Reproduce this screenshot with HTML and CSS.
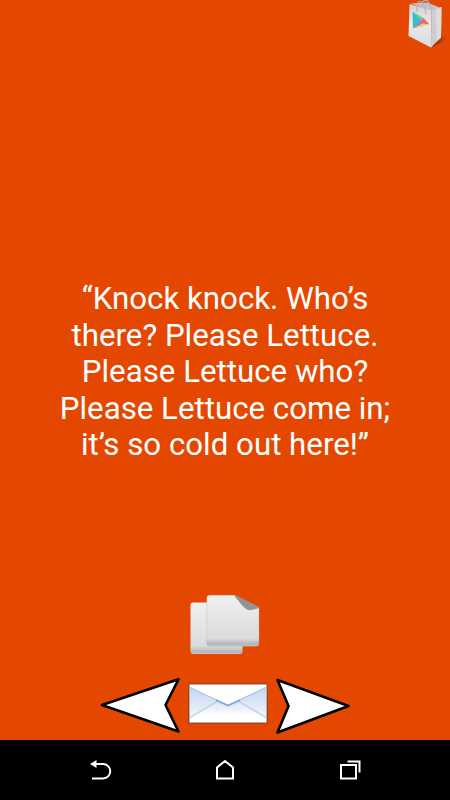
FILE: index.html
```html
<!DOCTYPE html>
<html lang="en">
<head>
    <meta charset="UTF-8">
    <meta name="viewport" content="width=device-width, initial-scale=1.0">
    <title>Knock Knock Jokes</title>
    <link rel="stylesheet" href="styles.css">
</head>
<body>

    <header>
        <svg class="store" width="50" height="50" viewBox="0 0 50 50">
            <defs>
                <linearGradient id="bag" x1="0" y1="0" x2="0" y2="1">
                    <stop offset="0" stop-color="#d3d3d6"/>
                    <stop offset="0.5" stop-color="#e9e9ec"/>
                    <stop offset="1" stop-color="#d8d9de"/>
                </linearGradient>
                <linearGradient id="shadow" x1="0" y1="0" x2="1" y2="0">
                    <stop offset="0" stop-color="#6b2000" stop-opacity="0.8"/>
                    <stop offset="1" stop-color="#6b2000" stop-opacity="0"/>
                </linearGradient>
            </defs>
            <path d="M31 47L41 36L48 38L39 44Z" fill="url(#shadow)"/>
            <path d="M10.500 3.500L27 2.500L41 8L31 11Z" fill="#c3c4c8"/>
            <path d="M9.500 4L31.500 10.500L31 47.500L8.500 36Z" fill="url(#bag)"/>
            <path d="M31.500 10.500L41.500 7L41 37.500L31 47.500Z" fill="#cdced2"/>
            <path d="M36 9.500L41.500 7L41 37.500L36.500 41Z" fill="#dcdde0"/>
            <path d="M12.500 11.500L13 28.500L21 20.500Z" fill="#35bfc8"/>
            <path d="M12.500 11.500L21 20.500L23.500 18Z" fill="#55d0a0"/>
            <path d="M20.500 20.500L23.500 18L29.500 24.500L23 24.500Z" fill="#ef6670"/>
            <path d="M13 28.500L20.500 20.500L23.500 24.500Z" fill="#a277c8"/>
            <path d="M13 28.500L22.500 23.500L29.500 24.500L22 26.500Z" fill="#e9cf65"/>
            <path d="M17 12V7C17 3 18 1.500 20 1.500S25 6 26 14M22 6V3.500C22 1 24 0.500 26 0.500S30 4 31 9" fill="none" stroke="#b4b4ba" stroke-width="1.200"/>
        </svg>
    </header>

    <main>
        <p class="joke">“Knock knock. Who’s<br>there? Please Lettuce.<br>Please Lettuce who?<br>Please Lettuce come in;<br>it’s so cold out here!”</p>
    </main>

    <div class="controls">
        <svg class="copy" width="90" height="75" viewBox="0 0 90 75">
            <defs>
                <linearGradient id="paper" x1="0" y1="0" x2="0" y2="1">
                    <stop offset="0" stop-color="#f0f0f0"/>
                    <stop offset="0.85" stop-color="#dadbdd"/>
                    <stop offset="0.96" stop-color="#b2b3b5"/>
                    <stop offset="1" stop-color="#c6c7c9"/>
                </linearGradient>
            </defs>
            <rect x="10.500" y="17.500" width="52" height="51.500" rx="2.500" fill="url(#paper)"/>
            <path d="M29.500 10.200H54.500L79 22.500V58.500Q79 61.200 76.300 61.200H29.500Q26.800 61.200 26.800 58.500V12.900Q26.800 10.200 29.500 10.200Z" fill="url(#paper)" stroke="#aeafb0" stroke-opacity="0.5" stroke-width="0.600"/>
            <path d="M54 10.200L57 10.700L79 22L78 23.500L70 25.200C65 25 60 18 54 10.200Z" fill="#929394"/>
        </svg>

        <div class="buttons">
            <svg class="prev" width="85" height="60" viewBox="0 0 85 60">
                <path d="M7 30L83.500 4.300L70.500 30L83.500 56.500Z" fill="#fff" stroke="#000" stroke-width="2.600" stroke-linejoin="round"/>
            </svg>
            <svg class="mail" width="90" height="60" viewBox="0 0 90 60">
                <defs>
                    <linearGradient id="side" x1="0" y1="0" x2="0" y2="1">
                        <stop offset="0" stop-color="#c1d5ee"/>
                        <stop offset="1" stop-color="#f4f8fc"/>
                    </linearGradient>
                    <linearGradient id="front" x1="0" y1="0" x2="0" y2="1">
                        <stop offset="0" stop-color="#d6e3f4"/>
                        <stop offset="0.700" stop-color="#fff"/>
                    </linearGradient>
                </defs>
                <rect x="3.200" y="8.200" width="79.600" height="40.600" rx="1" fill="#5d2c16" fill-opacity="0.6"/>
                <rect x="4" y="9" width="78" height="39" fill="#fff" stroke="#87563f" stroke-width="1"/>
                <path d="M5 12L33 26L5 43Z" fill="url(#side)"/>
                <path d="M81 12L53 26L81 43Z" fill="url(#side)"/>
                <path d="M5 43L33 26L43 30L53 26L81 43V47H5Z" fill="url(#front)"/>
                <path d="M5 42.500L33 26M81 42.500L53 26" fill="none" stroke="#b9cfe9" stroke-width="1.400"/>
                <path d="M5 12.500L33 25.800M81 12.500L53 25.800" fill="none" stroke="#a8c5e8" stroke-width="1.200"/>
                <path d="M31 25L43 30.500L55 25" fill="none" stroke="#7ba4da" stroke-width="1.800"/>
            </svg>
            <svg class="next" width="85" height="60" viewBox="0 0 85 60">
                <path d="M2.500 5L73.500 31L2.500 57.500L13.500 31Z" fill="#fff" stroke="#000" stroke-width="2.600" stroke-linejoin="round"/>
            </svg>
        </div>
    </div>

    <nav>
        <svg width="24" height="24" viewBox="0 0 24 24">
            <path d="M5 6H15A7.200 7.200 0 0 1 15 20.500H4" fill="none" stroke="#fff" stroke-width="2"/>
            <path d="M2 6L8.500 2V10Z" fill="#fff"/>
        </svg>
        <svg width="24" height="24" viewBox="0 0 24 24">
            <path d="M4 20.500V9.500L12 3L20 9.500V20.500Z" fill="none" stroke="#fff" stroke-width="2"/>
        </svg>
        <svg width="24" height="24" viewBox="0 0 24 24">
            <path d="M3 7H18V20.500H3Z" fill="none" stroke="#fff" stroke-width="2"/>
            <path d="M9.500 3.500H21.500V14.500" fill="none" stroke="#fff" stroke-width="2"/>
        </svg>
    </nav>

</body>
</html>
```
FILE: styles.css
```css
body {
    font-family: Roboto, sans-serif;
    background-color: #e44800;
    color: #fff;
    margin: 0;
    height: 800px;
    display: flex;
    flex-direction: column;
    overflow: hidden;
}

svg {
    display: block;
}

header {
    display: flex;
    justify-content: flex-end;
    height: 50px;
}

/* Joke text */
main {
    flex: 1;
    padding-top: 230px;
}

.joke {
    margin: 0;
    padding-top: 1px;
    font-size: 31.25px;
    line-height: 36.6px;
    text-align: center;
    white-space: nowrap;
}

/* Copy, share and arrows */
.controls {
    height: 155px;
    display: flex;
    flex-direction: column;
    gap: 15px;
}

.copy {
    margin-left: 180px;
    flex-shrink: 0;
}

.buttons {
    display: flex;
    margin-left: 95px;
}

.prev,
.mail,
.next {
    flex-shrink: 0;
}

.mail {
    margin-left: 5px;
}

/* System bar */
nav {
    display: flex;
    justify-content: space-between;
    align-items: center;
    height: 60px;
    padding: 0 88px;
    background-color: #000;
}
```
